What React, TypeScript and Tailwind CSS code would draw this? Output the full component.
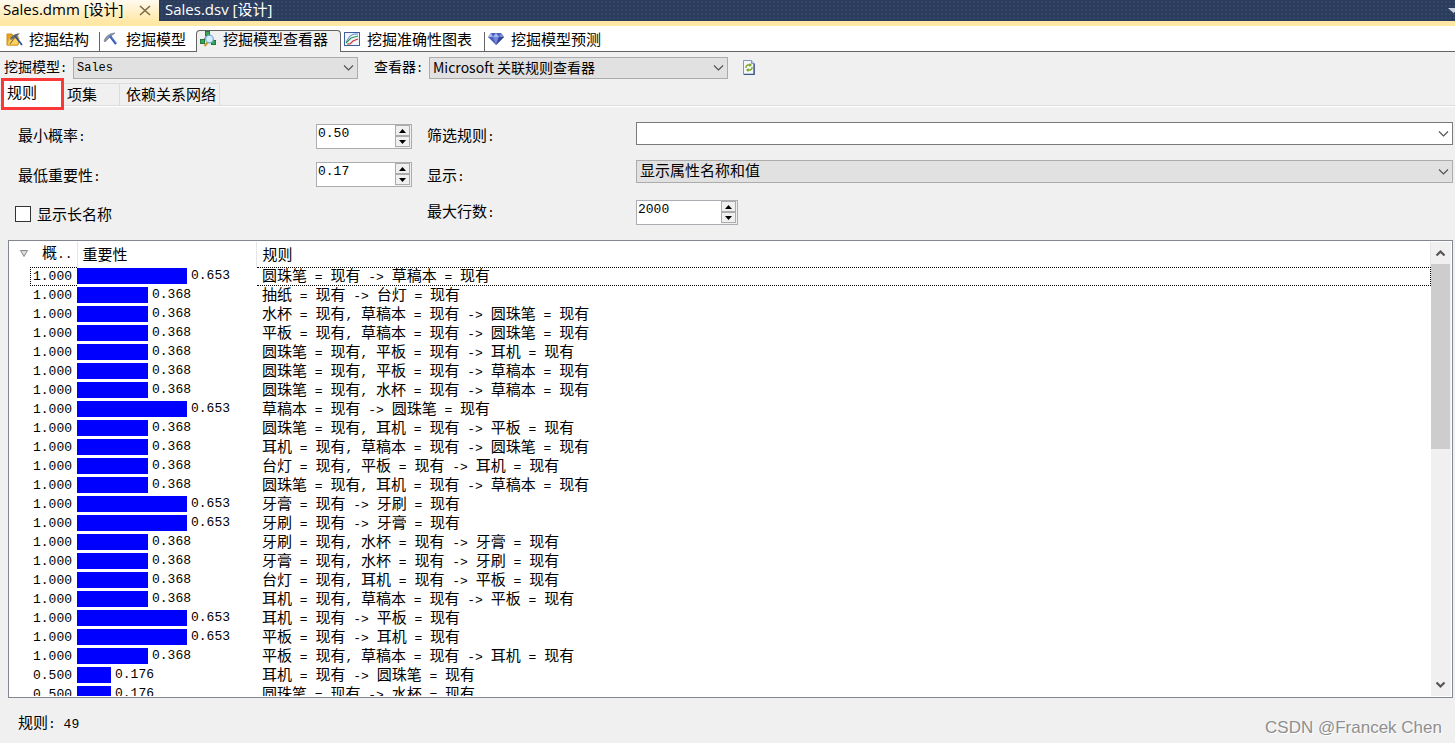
import React, { Fragment, ReactNode, useState } from "react";

function Mixed({ text, small = false }: { text: string; small?: boolean }) {
  const parts = text.split(/([\x20-\x7e]+)/).filter(Boolean);
  return (
    <>
      {parts.map((part, i) =>
        /^[\x20-\x7e]+$/.test(part) ? (
          <span
            key={i}
            className={
              small
                ? "whitespace-pre font-['Liberation_Mono',monospace] text-[12px]"
                : "whitespace-pre font-['Liberation_Mono',monospace] text-[13px]"
            }
          >
            {part}
          </span>
        ) : (
          <Fragment key={i}>{part}</Fragment>
        ),
      )}
    </>
  );
}

function FolderPickIcon() {
  return (
    <svg width="17" height="16" viewBox="0 0 17 16" aria-hidden="true">
      <path d="M1 3h5l1 2h5v9H1z" fill="#e8a317" stroke="#c98d17" />
      <path d="M1 14 3 7h10l-1 7z" fill="#fbd25c" stroke="#d9a02a" />
      <path d="M4 8C6 4 9 2.500 14 2.500L11 5 5 9z" fill="#5f6b78" />
      <path d="M9 5l7 9" stroke="#2b4f9c" strokeWidth="1.800" />
      <path d="M9 6 4 13" stroke="#8a7440" strokeWidth="1.200" />
    </svg>
  );
}

function PickIcon() {
  return (
    <svg width="16" height="16" viewBox="0 0 16 16" aria-hidden="true">
      <path d="M1 10C2.500 5.500 6 2.500 12 2L8 5 2 11z" fill="#8b97a8" stroke="#66748a" strokeWidth=".6" />
      <path d="M7 5l6 8" stroke="#2b55b5" strokeWidth="2.200" />
      <path d="M7.500 5l5.500 7" stroke="#7fa0e0" strokeWidth=".6" />
    </svg>
  );
}

function ViewerIcon() {
  return (
    <svg width="16" height="16" viewBox="0 0 16 16" aria-hidden="true">
      <path d="M7 4 3 10M8 4l5 8" stroke="#667" fill="none" />
      <rect x="5.500" y=".5" width="4" height="4" fill="#3aa655" stroke="#1f7a3a" />
      <rect x=".5" y="8.500" width="4" height="4" fill="#3aa655" stroke="#1f7a3a" />
      <rect x="11.500" y="9.500" width="4" height="4" fill="#3aa655" stroke="#1f7a3a" />
      <path d="M8 11l-3.500 4" stroke="#c89a2c" strokeWidth="2.200" />
      <circle cx="9.500" cy="8" r="3.800" fill="#d3edfc" stroke="#6ea6d8" strokeWidth="1.200" />
    </svg>
  );
}

function ChartIcon() {
  return (
    <svg width="16" height="14" viewBox="0 0 16 14" aria-hidden="true">
      <rect x=".5" y=".5" width="15" height="13" fill="#eef5ff" stroke="#3f6199" />
      <path d="M2 10 6 4l4-2h4" stroke="#5b86cf" fill="none" />
      <path d="M2 11l5-5 7-2" stroke="#2f9a45" fill="none" strokeWidth="1.200" />
      <path d="M3 12h3l3-3 5-2" stroke="#d03232" fill="none" strokeWidth="1.200" />
    </svg>
  );
}

function GemIcon() {
  return (
    <svg width="16" height="13" viewBox="0 0 16 13" aria-hidden="true">
      <path d="M3 1h10l3 4-8 8-8-8z" fill="#4c60bd" />
      <path d="M3 1 0 5h5zM8 1 5 5h6z" fill="#a9b8ee" />
      <path d="M13 1 11 5h5z" fill="#7b8bd6" />
      <path d="M5 5h6l-3 8z" fill="#7385dc" />
      <path d="M11 5h5l-8 8z" fill="#33439b" />
    </svg>
  );
}

function RefreshIcon() {
  return (
    <svg width="12" height="15" viewBox="0 0 12 15" aria-hidden="true">
      <path d="M.5.5h8l3 3v11H.5z" fill="#f4f8fd" stroke="#8195b8" />
      <path d="M11 4v10.500H1" stroke="#3c5588" fill="none" strokeWidth="1.300" />
      <path d="M8.500.5v3h3" stroke="#8195b8" fill="#cbd7ea" />
      <path d="M3 8V6.500L4.500 5H7M9 7v1.500L7.500 10H5" stroke="#77a51e" fill="none" strokeWidth="1.300" />
      <path d="M6.500 3v4l2.500-2zM5.500 8v4L3 10z" fill="#77a51e" />
    </svg>
  );
}

function Chevron() {
  return (
    <svg
      className="pointer-events-none absolute top-1/2 right-1 -translate-y-1/2"
      width="11"
      height="7"
      viewBox="0 0 11 7"
      aria-hidden="true"
    >
      <path d="M1 1l4.500 4.500L10 1" fill="none" stroke="#505050" strokeWidth="1.100" />
    </svg>
  );
}

function ScrollArrow({ up = false }: { up?: boolean }) {
  return (
    <svg width="11" height="8" viewBox="0 0 11 8" aria-hidden="true">
      <path
        d={up ? "M1.500 6.500l4-4 4 4" : "M1.500 1.500l4 4 4-4"}
        fill="none"
        stroke="#555"
        strokeWidth="2.200"
      />
    </svg>
  );
}

function Spinner({ id, value, className }: { id: string; value: string; className: string }) {
  const [text, setText] = useState(value);
  const decimals = value.includes(".") ? 2 : 0;
  const step = decimals ? 0.01 : 1;
  const change = (by: number) => setText((Number(text) + by).toFixed(decimals));
  const button =
    "flex h-[11px] w-[15px] items-center justify-center border border-[#acacac] bg-[#f0f0f0]";
  return (
    <div className={`flex h-[25px] border border-[#abadb3] bg-white ${className}`}>
      <input
        id={id}
        value={text}
        onChange={(e) => setText(e.target.value)}
        className="h-[19px] min-w-0 flex-1 bg-transparent pl-px font-['Liberation_Mono',monospace] text-[13px] outline-none"
      />
      <div className="flex flex-col justify-center bg-[#f0f0f0] pr-px">
        <button type="button" aria-label="增加" className={button} onClick={() => change(step)}>
          <svg width="7" height="4" viewBox="0 0 7 4" aria-hidden="true">
            <path d="M0 4 3.500 0 7 4z" />
          </svg>
        </button>
        <button type="button" aria-label="减少" className={button} onClick={() => change(-step)}>
          <svg width="7" height="4" viewBox="0 0 7 4" aria-hidden="true">
            <path d="M0 0h7L3.500 4z" />
          </svg>
        </button>
      </div>
    </div>
  );
}

function Combo({
  id,
  value,
  className,
  selectClass,
}: {
  id: string;
  value: string;
  className: string;
  selectClass: string;
}) {
  return (
    <div className={`relative ${className}`}>
      <select
        id={id}
        className={`block w-full appearance-none border pr-5 pl-[3px] outline-none ${selectClass}`}
      >
        <option>{value}</option>
      </select>
      <Chevron />
    </div>
  );
}

function DesignTab({
  icon,
  label,
  className,
}: {
  icon: ReactNode;
  label: string;
  className: string;
}) {
  return (
    <button type="button" className={`flex items-center whitespace-nowrap ${className}`}>
      {icon}
      <span>{label}</span>
    </button>
  );
}

type Rule = [probability: string, importance: string, rule: string];

const rules: Rule[] = [
  ["1.000", "0.653", "圆珠笔 = 现有 -> 草稿本 = 现有"],
  ["1.000", "0.368", "抽纸 = 现有 -> 台灯 = 现有"],
  ["1.000", "0.368", "水杯 = 现有, 草稿本 = 现有 -> 圆珠笔 = 现有"],
  ["1.000", "0.368", "平板 = 现有, 草稿本 = 现有 -> 圆珠笔 = 现有"],
  ["1.000", "0.368", "圆珠笔 = 现有, 平板 = 现有 -> 耳机 = 现有"],
  ["1.000", "0.368", "圆珠笔 = 现有, 平板 = 现有 -> 草稿本 = 现有"],
  ["1.000", "0.368", "圆珠笔 = 现有, 水杯 = 现有 -> 草稿本 = 现有"],
  ["1.000", "0.653", "草稿本 = 现有 -> 圆珠笔 = 现有"],
  ["1.000", "0.368", "圆珠笔 = 现有, 耳机 = 现有 -> 平板 = 现有"],
  ["1.000", "0.368", "耳机 = 现有, 草稿本 = 现有 -> 圆珠笔 = 现有"],
  ["1.000", "0.368", "台灯 = 现有, 平板 = 现有 -> 耳机 = 现有"],
  ["1.000", "0.368", "圆珠笔 = 现有, 耳机 = 现有 -> 草稿本 = 现有"],
  ["1.000", "0.653", "牙膏 = 现有 -> 牙刷 = 现有"],
  ["1.000", "0.653", "牙刷 = 现有 -> 牙膏 = 现有"],
  ["1.000", "0.368", "牙刷 = 现有, 水杯 = 现有 -> 牙膏 = 现有"],
  ["1.000", "0.368", "牙膏 = 现有, 水杯 = 现有 -> 牙刷 = 现有"],
  ["1.000", "0.368", "台灯 = 现有, 耳机 = 现有 -> 平板 = 现有"],
  ["1.000", "0.368", "耳机 = 现有, 草稿本 = 现有 -> 平板 = 现有"],
  ["1.000", "0.653", "耳机 = 现有 -> 平板 = 现有"],
  ["1.000", "0.653", "平板 = 现有 -> 耳机 = 现有"],
  ["1.000", "0.368", "平板 = 现有, 草稿本 = 现有 -> 耳机 = 现有"],
  ["0.500", "0.176", "耳机 = 现有 -> 圆珠笔 = 现有"],
  ["0.500", "0.176", "圆珠笔 = 现有 -> 水杯 = 现有"],
];

const barWidth: Record<string, string> = {
  "0.653": "w-[110px]",
  "0.368": "w-[71px]",
  "0.176": "w-[34px]",
};

function RuleTable() {
  return (
    <table className="w-full table-fixed border-collapse whitespace-nowrap">
      <colgroup>
        <col className="w-[67px]" />
        <col className="w-[179px]" />
        <col />
      </colgroup>
      <thead>
        <tr className="h-6 text-left">
          <th className="border-r border-[#e5e5e5] p-0 pb-[2px] font-normal">
            <div className="flex items-center justify-between pr-1 pl-[10px]">
              <svg width="8" height="7" viewBox="0 0 8 7" aria-hidden="true">
                <path d="M.5.5h7L4 6.500z" fill="#ddd" stroke="#888" />
              </svg>
              <span>
                <Mixed text="概.." />
              </span>
            </div>
          </th>
          <th className="border-r border-[#e5e5e5] p-0 pb-[2px] pl-[5px] font-normal">重要性</th>
          <th className="border-r border-[#e5e5e5] p-0 pb-[2px] pl-[6px] font-normal">规则</th>
        </tr>
      </thead>
      <tbody>
        {rules.map(([probability, importance, rule], i) => (
          <tr key={i} className="h-[19px]">
            <td className="p-0">
              <div
                className={
                  i === 0
                    ? "ml-5 h-[19px] border border-r-0 border-dotted border-black pr-[5px] text-right font-['Liberation_Mono',monospace] text-[13px] leading-[17px]"
                    : "ml-5 h-[19px] pr-[5px] text-right font-['Liberation_Mono',monospace] text-[13px] leading-[19px]"
                }
              >
                {probability}
              </div>
            </td>
            <td className="p-0">
              <div className="flex h-[19px] items-center gap-1 pb-px font-['Liberation_Mono',monospace] text-[13px] leading-[18px]">
                <span className={`h-4 bg-[#0000ff] ${barWidth[importance]}`} />
                <span>{importance}</span>
              </div>
            </td>
            <td className="p-0">
              <div
                className={
                  i === 0
                    ? "ml-px h-[19px] border border-l-0 border-dotted border-black pl-[5px] leading-[14px]"
                    : "ml-px h-[19px] pl-[5px] leading-4"
                }
              >
                <Mixed text={rule} />
              </div>
            </td>
          </tr>
        ))}
      </tbody>
    </table>
  );
}

export default function App() {
  return (
    <div className="flex h-screen flex-col overflow-hidden bg-[#f0f0f0] font-['Noto_Sans_CJK_SC',sans-serif] text-[15px] leading-5 text-black">
      <header className="flex h-[26px] shrink-0 items-start border-b-[5px] border-[#ffe8a6] bg-[#2c3d5c] bg-[radial-gradient(#32456a_1px,transparent_1px)] bg-[length:4px_4px] font-['Open_Sans','Noto_Sans_CJK_SC',sans-serif] leading-[18px]">
        <div className="flex h-[21px] w-[159px] items-start justify-between bg-linear-to-b from-[#fffaf0] to-[#ffe8a6] pr-2 pl-[3px]">
          <button type="button" className="whitespace-nowrap">
            Sales.dmm [设计]
          </button>
          <button type="button" aria-label="关闭" className="pt-[5px]">
            <svg width="12" height="11" viewBox="0 0 12 11" aria-hidden="true">
              <path d="M1 1l10 9M11 1 1 10" stroke="#7c6b44" strokeWidth="1.600" />
            </svg>
          </button>
        </div>
        <button type="button" className="pl-[6px] whitespace-nowrap text-white">
          Sales.dsv [设计]
        </button>
        <button type="button" aria-label="窗口列表" className="-mr-1 mt-2 ml-auto">
          <svg width="11" height="5" viewBox="0 0 11 5" aria-hidden="true">
            <path d="M0 0h11L5.500 5z" fill="#ced4df" />
          </svg>
        </button>
      </header>

      <nav className="flex h-[26px] shrink-0 items-stretch bg-white">
        <DesignTab
          icon={<FolderPickIcon />}
          label="挖掘结构"
          className="w-[99px] gap-[6px] border-b border-[#646464] pl-[6px]"
        />
        <DesignTab
          icon={<PickIcon />}
          label="挖掘模型"
          className="mt-[6px] w-[97px] gap-[7px] border-b border-l border-[#646464] pb-[6px] pl-[3px]"
        />
        <DesignTab
          icon={<ViewerIcon />}
          label="挖掘模型查看器"
          className="mt-1 w-[145px] gap-[7px] rounded-t border border-b-0 border-[#646464] bg-[#f0f0f0] pb-[5px] pl-[3px]"
        />
        <DesignTab
          icon={<ChartIcon />}
          label="挖掘准确性图表"
          className="w-[143px] gap-[7px] border-b border-[#646464] pl-[3px]"
        />
        <DesignTab
          icon={<GemIcon />}
          label="挖掘模型预测"
          className="mt-[6px] flex-1 gap-[7px] border-b border-l border-[#646464] pb-[6px] pl-[3px]"
        />
      </nav>

      <div className="flex shrink-0 items-center pt-1 pb-[3px] pl-1 text-[14px]">
        <label htmlFor="model" className="w-[69px] whitespace-nowrap">
          <Mixed text="挖掘模型:" small />
        </label>
        <Combo
          id="model"
          value="Sales"
          className="w-[285px]"
          selectClass="h-[22px] border-[#acacac] bg-[#e1e1e1] font-['Liberation_Mono',monospace] text-[12px]"
        />
        <label htmlFor="viewer" className="ml-4 w-[55px] whitespace-nowrap">
          <Mixed text="查看器:" small />
        </label>
        <Combo
          id="viewer"
          value="Microsoft 关联规则查看器"
          className="w-[299px]"
          selectClass="h-[22px] border-[#acacac] bg-[#e1e1e1] pb-[2px] text-[14px] leading-[18px]"
        />
        <button type="button" aria-label="刷新" className="ml-[15px]">
          <RefreshIcon />
        </button>
      </div>

      <div className="flex h-6 shrink-0 items-end border-b border-[#dcdcdc]">
        <button
          type="button"
          className="z-10 -mb-[5px] ml-px h-8 w-[63px] border-3 border-[#fa3837] bg-white pb-[5px] pl-[3px] text-left"
        >
          规则
        </button>
        <button type="button" className="h-[22px] w-14 border-t border-r border-[#dcdcdc] pb-px pl-[3px] text-left">
          项集
        </button>
        <button type="button" className="h-[22px] w-[100px] border-t border-r border-[#dcdcdc] pb-px pl-[6px] text-left whitespace-nowrap">
          依赖关系网络
        </button>
      </div>

      <main className="ml-[2px] flex min-h-0 flex-1 flex-col border-t border-white">
        <form className="grid shrink-0 grid-cols-[298px_111px_209px_1fr] grid-rows-[38px_38px_38px] items-center pt-[10px] pr-[2px] pb-[9px] pl-4">
          <label htmlFor="probability">
            <Mixed text="最小概率:" />
          </label>
          <Spinner id="probability" value="0.50" className="w-24" />
          <label htmlFor="filter">
            <Mixed text="筛选规则:" />
          </label>
          <Combo
            id="filter"
            value=""
            className="mt-[5px] self-start"
            selectClass="h-[23px] border-[#7a7a7a] bg-white"
          />
          <label htmlFor="importance" className="pt-1">
            <Mixed text="最低重要性:" />
          </label>
          <Spinner id="importance" value="0.17" className="w-24" />
          <label htmlFor="display" className="pt-1">
            <Mixed text="显示:" />
          </label>
          <Combo
            id="display"
            value="显示属性名称和值"
            className="mt-[5px] self-start"
            selectClass="h-[23px] border-[#acacac] bg-[#e1e1e1] pb-[3px] leading-[18px]"
          />
          <label className="col-span-2 -ml-[3px] flex items-center gap-[6px] pt-1">
            <input type="checkbox" className="size-4 appearance-none border border-[#333] bg-white checked:bg-[#333]" />
            显示长名称
          </label>
          <label htmlFor="rows">
            <Mixed text="最大行数:" />
          </label>
          <Spinner id="rows" value="2000" className="w-[102px]" />
        </form>

        <section className="mr-[2px] ml-[6px] flex min-h-0 flex-1 border border-[#828790] bg-white p-px">
          <div className="min-w-0 flex-1 overflow-hidden">
            <RuleTable />
          </div>
          <div className="flex w-5 flex-col bg-[#f0f0f0] pr-px">
            <button type="button" aria-label="向上滚动" className="flex h-[22px] items-center justify-center">
              <ScrollArrow up />
            </button>
            <div className="flex-1">
              <div className="h-[45%] bg-[#cdcdcd]" />
            </div>
            <button type="button" aria-label="向下滚动" className="flex h-[22px] items-center justify-center">
              <ScrollArrow />
            </button>
          </div>
        </section>

        <footer className="flex h-[45px] shrink-0 items-center justify-between pr-[13px] pl-4">
          <span className="pt-[6px]">
            <Mixed text="规则: 49" />
          </span>
          <span className="pt-[14px] font-['Liberation_Sans',sans-serif] text-[17px] text-[#8f8f8f] [text-shadow:1px_1px_0_#fff]">
            CSDN @Francek Chen
          </span>
        </footer>
      </main>
    </div>
  );
}
